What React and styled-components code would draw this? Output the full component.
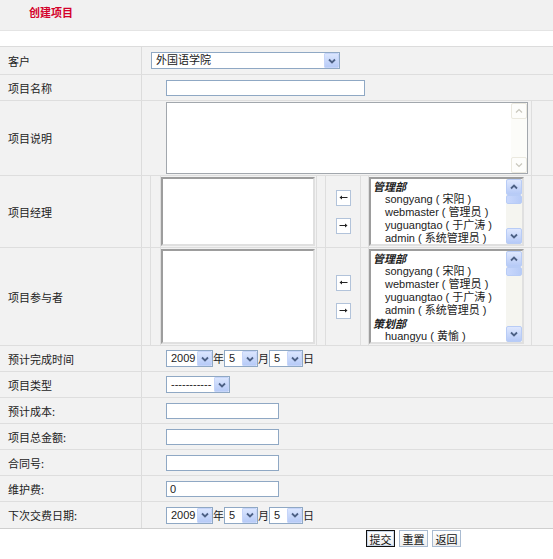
import React from "react";
import styled, { createGlobalStyle } from "styled-components";

const GlobalStyle = createGlobalStyle`
  body {
    margin: 0;
    background: #fff;
    font-family: "Liberation Sans", "Noto Sans CJK SC", sans-serif;
    font-size: 11px;
    color: #222;
  }
`;

const Page = styled.div`
  width: 553px;
`;

const Header = styled.div`
  height: 31px;
  box-sizing: border-box;
  background: #f1f1f1;
  border-bottom: 1px solid #e4e4e4;
  display: flex;
  align-items: flex-start;
  padding: 4px 0 0 29px;
`;

const Title = styled.h1`
  margin: 0;
  font-size: 11px;
  line-height: 16px;
  font-weight: bold;
  color: #d4002b;
  font-family: "Noto Sans CJK SC", sans-serif;
`;

const Gap = styled.div`
  height: 15px;
`;

const Table = styled.div`
  border-top: 1px solid #dcdcdc;
  border-bottom: 1px solid #cfcfcf;
  background: #f2f2f2;
`;

const Row = styled.div`
  display: flex;
  height: ${(p) => p.$h}px;
  box-sizing: border-box;
  border-bottom: ${(p) => (p.$last ? "none" : "1px solid #dedede")};
`;

const Label = styled.div`
  width: 142px;
  flex: none;
  box-sizing: border-box;
  border-right: 1px solid #dcdcdc;
  padding-left: 8px;
  display: flex;
  align-items: center;
  font-family: "Noto Sans CJK SC", sans-serif;
`;

const Content = styled.div`
  flex: 1;
  display: flex;
  align-items: center;
  padding-left: ${(p) => p.$pl ?? 24}px;
`;

const Split = styled.div`
  flex: 1;
  display: flex;
  align-items: stretch;
`;

const Cell = styled.div`
  width: ${(p) => (p.$w ? `${p.$w}px` : "auto")};
  flex: ${(p) => (p.$w ? "none" : 1)};
  box-sizing: border-box;
  border-left: ${(p) => (p.$first ? "none" : "1px solid #dedede")};
  display: flex;
  flex-direction: ${(p) => (p.$col ? "column" : "row")};
  align-items: center;
  justify-content: ${(p) => (p.$center ? "center" : "flex-start")};
  gap: ${(p) => p.$gap || 0}px;
  padding-left: ${(p) => p.$pl || 0}px;
`;

const TextInput = styled.div`
  width: ${(p) => p.$w}px;
  height: 16px;
  box-sizing: border-box;
  border: 1px solid #8fa8c4;
  background: #fff;
  padding-left: 3px;
  line-height: 14px;
`;

const SelectBox = styled.div`
  width: ${(p) => p.$w}px;
  height: 17px;
  box-sizing: border-box;
  border: 1px solid #8fa8c4;
  background: #fff;
  display: flex;
  align-items: center;
`;

const SelectText = styled.span`
  flex: 1;
  padding-left: ${(p) => p.$pl ?? 4}px;
  white-space: nowrap;
  overflow: hidden;
  line-height: 15px;
`;

const DropButton = styled.span`
  width: 15px;
  height: 15px;
  box-sizing: border-box;
  border: 1px solid #c6d5f9;
  border-radius: 1px;
  background: linear-gradient(#dbe6fe, #b7cbf7);
  display: flex;
  align-items: center;
  justify-content: center;
`;

const Unit = styled.span`
  font-family: "Noto Sans CJK SC", sans-serif;
  width: 11px;
  text-align: center;
  line-height: 17px;
`;

const DateGroup = styled.div`
  display: flex;
  align-items: center;
`;

const TextArea = styled.div`
  width: 362px;
  height: 72px;
  box-sizing: border-box;
  border: 1px solid #a2a7ad;
  background: #fff;
  display: flex;
  justify-content: flex-end;
`;

const ListBox = styled.div`
  width: ${(p) => p.$w}px;
  height: ${(p) => p.$h}px;
  box-sizing: border-box;
  border: 2px solid;
  border-color: #9d9d9d #e0e0e0 #e0e0e0 #9d9d9d;
  background: #fff;
  display: flex;
`;

const Options = styled.div`
  flex: 1;
  padding: 1px 0 0 2px;
  overflow: hidden;
`;

const Group = styled.div`
  font-family: "Noto Sans CJK SC", sans-serif;
  font-weight: bold;
  font-style: italic;
  height: 13px;
  line-height: 13px;
`;

const Option = styled.div`
  padding-left: 12px;
  height: 13px;
  line-height: 13px;
  white-space: nowrap;
`;

const Scroll = styled.div`
  width: 16px;
  flex: none;
  display: flex;
  flex-direction: column;
  background: ${(p) => (p.$off ? "#fcfcf9" : "#f5f5f0")};
`;

const ScrollButton = styled.div`
  height: 16px;
  box-sizing: border-box;
  border: 1px solid ${(p) => (p.$off ? "#ebe9df" : "#b8ccf6")};
  border-radius: 2px;
  background: ${(p) => (p.$off ? "#fdfdfb" : "linear-gradient(#dfe8fe, #b6caf7)")};
  display: flex;
  align-items: center;
  justify-content: center;
`;

const Thumb = styled.div`
  height: 9px;
  box-sizing: border-box;
  border: 1px solid #b8ccf6;
  border-radius: 2px;
  background: linear-gradient(90deg, #c9d8fc, #b7cbf7);
`;

const Track = styled.div`
  flex: 1;
`;

const ArrowButton = styled.div`
  width: 15px;
  height: 16px;
  box-sizing: border-box;
  border: 1px solid #b2c3da;
  background: #fff;
  display: flex;
  align-items: center;
  justify-content: center;
`;

const ButtonBar = styled.div`
  display: flex;
  gap: 4px;
  padding: 1px 0 0 366px;
`;

const Button = styled.button`
  width: 29px;
  height: 17px;
  box-sizing: border-box;
  padding: 0;
  border: 1px solid ${(p) => (p.$primary ? "#111" : "#a9bbd1")};
  box-shadow: ${(p) => (p.$primary ? "inset 0 0 0 1px #c9d6e8" : "none")};
  background: linear-gradient(#ffffff, #eeeeee);
  font-family: "Noto Sans CJK SC", sans-serif;
  font-size: 11px;
  line-height: 14px;
  color: #111;
`;

const Chevron = ({ dir = "down", off }) => (
  <svg width="8" height="6" viewBox="0 0 8 6">
    <path
      d={dir === "down" ? "M1 1.5 L4 4.5 L7 1.5" : "M1 4.5 L4 1.5 L7 4.5"}
      fill="none"
      stroke={off ? "#c9c7bd" : "#4d6185"}
      strokeWidth={off ? 1.2 : 1.8}
    />
  </svg>
);

const Arrow = ({ left }) => (
  <svg width="9" height="5" viewBox="0 0 9 5">
    <g transform={left ? "" : "translate(9 0) scale(-1 1)"}>
      <path d="M2.5 2.5 H8.5" stroke="#222" strokeWidth="1" />
      <path d="M0.5 2.5 L3 0.5 L3 4.5 Z" fill="#222" />
    </g>
  </svg>
);

const Select = ({ w, value, pl }) => (
  <SelectBox $w={w}>
    <SelectText $pl={pl}>{value}</SelectText>
    <DropButton>
      <Chevron />
    </DropButton>
  </SelectBox>
);

const DatePicker = () => (
  <DateGroup>
    <Select w={47} value="2009" />
    <Unit>年</Unit>
    <Select w={34} value="5" />
    <Unit>月</Unit>
    <Select w={34} value="5" />
    <Unit>日</Unit>
  </DateGroup>
);

const ScrollBar = ({ off }) => (
  <Scroll $off={off}>
    <ScrollButton $off={off}>
      <Chevron dir="up" off={off} />
    </ScrollButton>
    {!off && <Thumb />}
    <Track />
    <ScrollButton $off={off}>
      <Chevron off={off} />
    </ScrollButton>
  </Scroll>
);

const staff = [
  { group: "管理部" },
  { name: "songyang", cn: "宋阳" },
  { name: "webmaster", cn: "管理员" },
  { name: "yuguangtao", cn: "于广涛" },
  { name: "admin", cn: "系统管理员" },
  { group: "策划部" },
  { name: "huangyu", cn: "黄愉" },
];

const StaffList = ({ h, rows }) => (
  <ListBox $w={155} $h={h}>
    <Options>
      {staff.slice(0, rows).map((s, i) =>
        s.group ? (
          <Group key={i}>{s.group}</Group>
        ) : (
          <Option key={i}>
            {s.name} ( {s.cn} )
          </Option>
        )
      )}
    </Options>
    <ScrollBar />
  </ListBox>
);

const PickerRow = ({ label, h, rows }) => (
  <Row $h={h}>
    <Label>{label}</Label>
    <Split>
      <Cell $w={8} $first />
      <Cell $w={10} />
      <Cell $w={156}>
        <ListBox $w={154} $h={h - 3} />
      </Cell>
      <Cell $w={9} />
      <Cell $w={35} $col $center $gap={12}>
        <ArrowButton>
          <Arrow left />
        </ArrowButton>
        <ArrowButton>
          <Arrow />
        </ArrowButton>
      </Cell>
      <Cell $w={8} />
      <Cell $w={163}>
        <StaffList h={h - 3} rows={rows} />
      </Cell>
      <Cell />
    </Split>
  </Row>
);

const InputRow = ({ label, w = 113, value }) => (
  <Row $h={26}>
    <Label>{label}</Label>
    <Content>
      <TextInput $w={w}>{value}</TextInput>
    </Content>
  </Row>
);

export default function App() {
  return (
    <Page>
      <GlobalStyle />
      <Header>
        <Title>创建项目</Title>
      </Header>
      <Gap />
      <Table>
        <Row $h={28}>
          <Label>客户</Label>
          <Content $pl={9}>
            <Select w={189} value="外国语学院" />
          </Content>
        </Row>
        <InputRow label="项目名称" w={199} />
        <Row $h={75}>
          <Label>项目说明</Label>
          <Split>
            <Cell $w={389} $first $pl={24}>
              <TextArea>
                <ScrollBar off />
              </TextArea>
            </Cell>
            <Cell />
          </Split>
        </Row>
        <PickerRow label="项目经理" h={72} rows={5} />
        <PickerRow label="项目参与者" h={98} rows={7} />
        <Row $h={26}>
          <Label>预计完成时间</Label>
          <Content>
            <DatePicker />
          </Content>
        </Row>
        <Row $h={26}>
          <Label>项目类型</Label>
          <Content>
            <Select w={64} value="-----------" />
          </Content>
        </Row>
        <InputRow label="预计成本:" />
        <InputRow label="项目总金额:" />
        <InputRow label="合同号:" />
        <InputRow label="维护费:" value="0" />
        <Row $h={26} $last>
          <Label>下次交费日期:</Label>
          <Content>
            <DatePicker />
          </Content>
        </Row>
      </Table>
      <ButtonBar>
        <Button $primary>提交</Button>
        <Button>重置</Button>
        <Button>返回</Button>
      </ButtonBar>
    </Page>
  );
}
